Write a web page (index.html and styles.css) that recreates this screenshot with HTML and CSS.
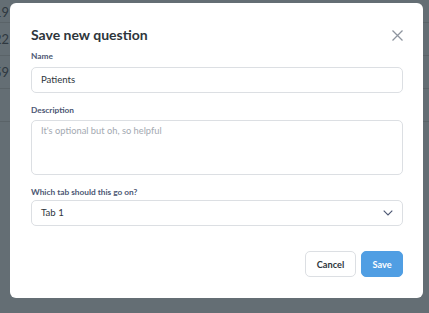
FILE: index.html
```html
<!DOCTYPE html>
<html lang="en">
<head>
  <meta charset="UTF-8">
  <title>Save new question</title>
  <link rel="stylesheet" href="styles.css">
</head>
<body>
  <div class="backdrop">
    <div class="bg-row"><span>19</span></div>
    <div class="bg-row"><span>22</span></div>
    <div class="bg-row"><span>59</span></div>
    <div class="bg-row"><span></span></div>
  </div>
  <div class="modal">
    <div class="modal-header">
      <h2>Save new question</h2>
      <button class="close-btn" aria-label="Close">
        <svg width="11" height="11" viewBox="0 0 11 11"><path d="M0.5 0.5 L10.5 10.5 M10.5 0.5 L0.5 10.5" stroke="#8e959f" stroke-width="1.3" fill="none"/></svg>
      </button>
    </div>
    <label class="field-label name-label">Name</label>
    <div class="field input">Patients</div>
    <label class="field-label desc-label">Description</label>
    <div class="field textarea placeholder">It's optional but oh, so helpful</div>
    <label class="field-label tab-label">Which tab should this go on?</label>
    <div class="field input select">
      <span>Tab 1</span>
      <svg width="10" height="6" viewBox="0 0 10 6"><path d="M0.7 0.7 L5 5 L9.3 0.7" stroke="#4c5773" stroke-width="1.1" fill="none"/></svg>
    </div>
    <div class="actions">
      <button class="btn">Cancel</button>
      <button class="btn primary">Save</button>
    </div>
  </div>
</body>
</html>
```

FILE: styles.css
```css
body {
  margin: 0;
  width: 429px;
  height: 313px;
  overflow: hidden;
  background: #646e74;
  font-family: Lato, "Noto Sans", sans-serif;
  position: relative;
}
.bg-row {
  height: 32px;
  border-bottom: 1px solid #5a6368;
  display: flex;
  align-items: center;
  color: #2f3840;
  font-size: 13px;
  margin-left: -6px;
}
.bg-row:first-child {
  height: 20px;
  align-items: flex-end;
  padding-bottom: 2px;
}
.modal {
  position: absolute;
  left: 10px;
  top: 3px;
  height: 295px;
  box-sizing: border-box;
  width: 413px;
  padding: 23px 20px 0 21px;
  background: #fff;
  border-radius: 6px;
}
.modal-header {
  display: flex;
  justify-content: space-between;
  align-items: center;
  height: 18px;
  margin-bottom: 6.5px;
}
.modal-header h2 {
  margin: 0;
  font-size: 14px;
  line-height: 18px;
  font-weight: 700;
  color: #2e353b;
}
.close-btn {
  border: none;
  background: none;
  padding: 0;
  margin-top: 1px;
  display: flex;
}
.field-label {
  display: block;
  font-size: 8.3px;
  line-height: 11px;
  font-weight: 700;
  color: #4c5773;
}
.name-label { margin-bottom: 5px; }
.desc-label { margin-bottom: 4px; }
.tab-label { margin-bottom: 1.5px; }
.field {
  border: 1px solid #dcdfe3;
  border-radius: 5px;
  box-sizing: border-box;
  font-size: 9.6px;
  color: #2e353b;
  padding: 0 9px;
}
.input {
  height: 26px;
  display: flex;
  align-items: center;
  margin-bottom: 12px;
}
.textarea {
  height: 55px;
  padding-top: 4.5px;
  line-height: 12px;
  font-size: 9.3px;
  margin-bottom: 12.5px;
}
.placeholder {
  color: #a3a9b1;
}
.select {
  justify-content: space-between;
  padding-right: 9px;
  margin-bottom: 25.5px;
}
.actions {
  display: flex;
  justify-content: flex-end;
  gap: 5px;
}
.btn {
  height: 26px;
  width: 51px;
  padding: 0;
  border: 1px solid #dcdfe3;
  border-radius: 5px;
  background: #fff;
  font-family: Lato, "Noto Sans", sans-serif;
  font-size: 9.2px;
  font-weight: 700;
  color: #2e353b;
}
.btn.primary {
  background: #509ee3;
  border-color: #509ee3;
  color: #fff;
  width: 42px;
}
```
